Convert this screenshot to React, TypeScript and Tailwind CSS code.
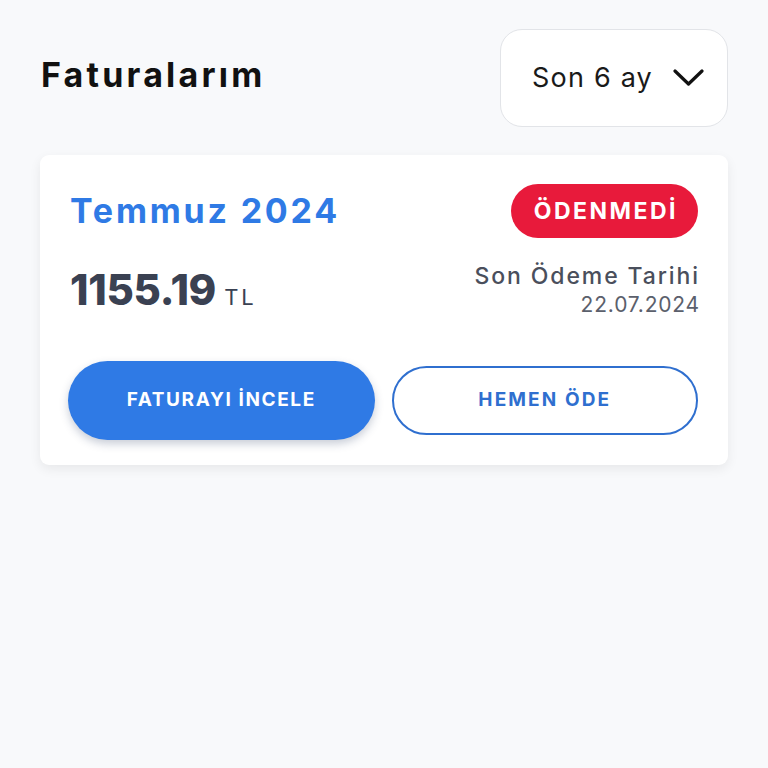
import React from "react";

export default function App() {
  return (
    <div
      className="min-h-[768px] w-full bg-[#f8f9fb] px-10 pt-[29px]"
      style={{ fontFamily: "Inter, 'Noto Sans', sans-serif" }}
    >
      <div className="flex items-center justify-between">
        <h1 className="-mt-[6px] pl-px text-[34px] font-bold leading-none tracking-[3.2px] text-[#111111]">Faturalarım</h1>
        <button className="flex h-[98px] w-[228px] items-center justify-center gap-5 rounded-[22px] border border-[#e2e4e8] bg-white pl-[8px]">
          <span className="text-[27px] font-normal tracking-[1.2px] text-[#1a1a1a]">Son 6 ay</span>
          <svg width="31" height="18" viewBox="0 0 31 18" fill="none">
            <path d="M2 2 L15.5 15 L29 2" stroke="#111" strokeWidth="3.2" strokeLinecap="round" strokeLinejoin="round" />
          </svg>
        </button>
      </div>

      <div className="mt-[28px] rounded-[9px] bg-white px-[30px] pb-[25px] pt-[29px] shadow-[0_4px_12px_rgba(0,0,0,0.07)]">
        <div className="flex items-center justify-between">
          <span className="text-[34px] font-bold leading-none tracking-[2.8px] text-[#2f7ae5]">Temmuz 2024</span>
          <span className="flex h-[54px] items-center rounded-full bg-[#e81a3b] pl-[23px] pr-[20px] text-[23px] font-bold tracking-[2.5px] text-white">
            ÖDENMEDİ
          </span>
        </div>

        <div className="mt-[24px] flex items-center justify-between">
          <div className="flex items-baseline gap-[8px]">
            <span className="text-[42px] font-extrabold leading-none tracking-[-0.3px] text-[#3a4152]">1155.19</span>
            <span className="text-[22px] font-normal tracking-[3px] text-[#3a4152]">TL</span>
          </div>
          <div className="-mr-[2px] flex flex-col items-end">
            <span className="text-[23px] font-medium leading-[28px] tracking-[1.9px] text-[#4a4f5c]">Son Ödeme Tarihi</span>
            <span className="text-[21px] font-normal leading-[30px] tracking-[0.8px] text-[#5b606c]">22.07.2024</span>
          </div>
        </div>

        <div className="mt-[41px] flex items-center gap-[17px]">
          <button className="-ml-[2px] flex h-[79px] w-[307px] items-center justify-center rounded-full bg-[#2f7ae5] text-[19px] font-bold tracking-[1.6px] text-white shadow-[0_4px_8px_rgba(40,60,100,0.25)]">
            FATURAYI İNCELE
          </button>
          <button className="flex h-[69px] w-[307px] items-center justify-center rounded-full border-2 border-[#2f6fcf] bg-white text-[19px] font-bold tracking-[2.1px] text-[#2f6fcf]">
            HEMEN ÖDE
          </button>
        </div>
      </div>
    </div>
  );
}
